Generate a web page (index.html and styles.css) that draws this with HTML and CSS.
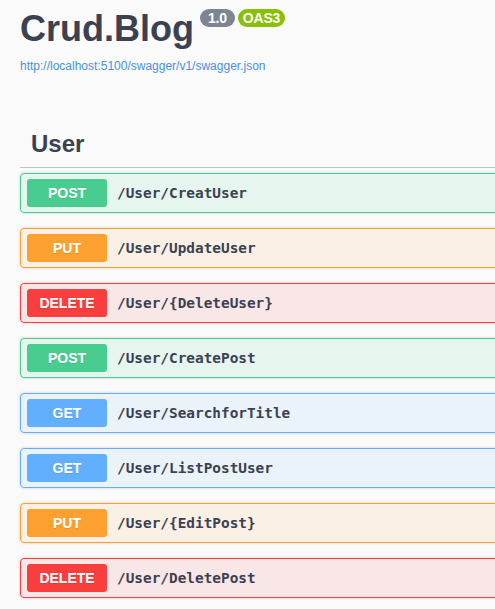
FILE: index.html
```html
<!DOCTYPE html>
<html>
<head>
<meta charset="utf-8">
<link rel="stylesheet" href="styles.css">
</head>
<body>
<div class="wrapper">
  <div class="info">
    <h2 class="title">Crud.Blog <span class="badge version">1.0</span><span class="badge oas">OAS3</span></h2>
    <a class="url" href="#">http://localhost:5100/swagger/v1/swagger.json</a>
  </div>
  <div class="tag-section">
    <h3 class="tag">User</h3>
    <div class="opblock post"><span class="method">POST</span><span class="path">/User/CreatUser</span></div>
    <div class="opblock put"><span class="method">PUT</span><span class="path">/User/UpdateUser</span></div>
    <div class="opblock delete"><span class="method">DELETE</span><span class="path">/User/{DeleteUser}</span></div>
    <div class="opblock post"><span class="method">POST</span><span class="path">/User/CreatePost</span></div>
    <div class="opblock get"><span class="method">GET</span><span class="path">/User/SearchforTitle</span></div>
    <div class="opblock get"><span class="method">GET</span><span class="path">/User/ListPostUser</span></div>
    <div class="opblock put"><span class="method">PUT</span><span class="path">/User/{EditPost}</span></div>
    <div class="opblock delete"><span class="method">DELETE</span><span class="path">/User/DeletePost</span></div>
  </div>
</div>
</body>
</html>
```

FILE: styles.css
```css
html, body {
  margin: 0;
  padding: 0;
  background: #fafafa;
  overflow: hidden;
  font-family: "Liberation Sans", Arial, sans-serif;
  color: #3b4151;
}

.wrapper {
  width: 1200px;
  padding: 0 20px;
}

.info {
  padding-top: 8px;
}

.title {
  margin: 0;
  font-size: 36px;
  font-weight: 700;
  line-height: 41px;
  color: #3b4151;
  display: flex;
  align-items: flex-start;
}

.badge {
  display: inline-block;
  margin-top: 1px;
  color: #fff;
  font-size: 14px;
  font-weight: 700;
  line-height: 18px;
  border-radius: 57px;
  letter-spacing: -0.2px;
}

.version {
  background: #7d8492;
  margin-left: 6px;
  padding: 0 8px;
}

.oas {
  background: #89bf04;
  margin-left: 3px;
  padding: 0 5px;
}

.url {
  display: block;
  margin-top: 10px;
  font-size: 12px;
  color: #4990e2;
  text-decoration: none;
}

.tag-section {
  margin-top: 48px;
}

.tag {
  margin: 0 0 5px;
  padding: 8px 20px 9px 11px;
  font-size: 24px;
  line-height: 29px;
  font-weight: 700;
  color: #3b4151;
  border-bottom: 1px solid rgba(59, 65, 81, 0.3);
}

.opblock {
  display: flex;
  align-items: center;
  padding: 5px 6px;
  margin: 0 0 15px;
  border: 1px solid;
  border-radius: 4px;
  box-shadow: 0 0 3px rgba(0, 0, 0, 0.19);
}

.method {
  min-width: 80px;
  padding: 6px 0;
  text-align: center;
  font-size: 14px;
  line-height: 16px;
  font-weight: 700;
  color: #fff;
  border-radius: 3px;
  text-shadow: 0 1px 0 rgba(0, 0, 0, 0.1);
}

.path {
  padding: 0 10px;
  font-family: "DejaVu Sans Mono", monospace;
  font-size: 14.4px;
  font-weight: 700;
  color: #3b4151;
}

.post { background: rgba(73, 204, 144, 0.1); border-color: #49cc90; }
.post .method { background: #49cc90; }

.put { background: rgba(252, 161, 48, 0.1); border-color: #fca130; }
.put .method { background: #fca130; }

.delete { background: rgba(249, 62, 62, 0.1); border-color: #f93e3e; }
.delete .method { background: #f93e3e; }

.get { background: rgba(97, 175, 254, 0.1); border-color: #61affe; }
.get .method { background: #61affe; }
```
